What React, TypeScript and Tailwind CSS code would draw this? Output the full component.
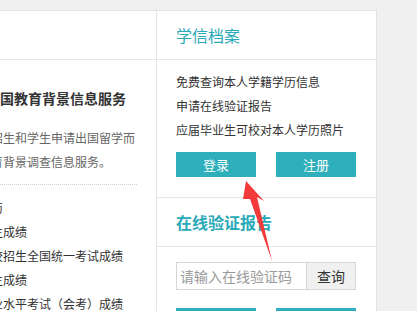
import React from "react";

const font = { fontFamily: '"Noto Sans CJK SC", "Noto Sans", sans-serif' };

export default function App() {
  return (
    <div
      className="relative w-[417px] h-[311px] overflow-hidden bg-[#f0f0f0] pt-[10px]"
      style={font}
    >
      <div className="flex w-[377px] h-[301px] bg-white border-t border-r border-[#e2e2e2]">
        {/* left panel */}
        <div className="w-[157px] shrink-0 border-r border-[#e6e6e6] overflow-hidden">
          <div className="h-[49px] border-b border-[#e6e6e6]" />
          <div className="-ml-[21px] w-[158px] pt-[26px]">
            <div className="ml-[7px] whitespace-nowrap text-[14px] leading-[24px] font-bold text-[#333]">
              中国教育背景信息服务
            </div>
            <div className="mt-[16px] text-[12px] leading-[24px] text-[#666] whitespace-nowrap">
              <div>校招生和学生申请出国留学而</div>
              <div>教育背景调查信息服务。</div>
            </div>
            <div className="mt-[10px] border-t border-dotted border-[#cfcfcf] pt-[11px] text-[12px] leading-[24px] text-[#333] whitespace-nowrap">
              <div>学历</div>
              <div>考生成绩</div>
              <div>高校招生全国统一考试成绩</div>
              <div>考生成绩</div>
              <div>学业水平考试（会考）成绩</div>
            </div>
          </div>
        </div>
        {/* right panel */}
        <div className="flex-1">
          <div className="h-[49px] border-b border-[#e6e6e6] flex items-center pl-[19px]">
            <span className="text-[16px] text-[#2aa9b8]">学信档案</span>
          </div>
          <div className="pl-[19px] pr-[20px] pt-[10px] pb-[20px] border-b border-[#e6e6e6]">
            <div className="text-[12px] leading-[24px] text-[#333]">
              <div>免费查询本人学籍学历信息</div>
              <div>申请在线验证报告</div>
              <div>应届毕业生可校对本人学历照片</div>
            </div>
            <div className="mt-[10px] flex gap-[20px]">
              <div className="w-[80px] h-[25px] bg-[#2eafbb] text-white text-[13px] flex items-center justify-center">
                登录
              </div>
              <div className="w-[80px] h-[25px] bg-[#2eafbb] text-white text-[13px] flex items-center justify-center">
                注册
              </div>
            </div>
          </div>
          <div className="h-[49px] border-b border-[#e6e6e6] flex items-center pl-[19px]">
            <span className="text-[16px] font-bold text-[#2aa9b8]">在线验证报告</span>
          </div>
          <div className="pl-[19px] pr-[20px] pt-[15px]">
            <div className="flex h-[28px]">
              <div className="w-[130px] h-[28px] border border-r-0 border-[#d6d6d6] flex items-center pl-[3px] text-[14px] text-[#999] whitespace-nowrap overflow-hidden">
                请输入在线验证码
              </div>
              <div className="w-[50px] h-[28px] border border-[#d6d6d6] bg-[#f0f0f0] flex items-center justify-center text-[14px] text-[#333]">
                查询
              </div>
            </div>
            <div className="mt-[18px] flex gap-[20px]">
              <div className="w-[80px] h-[25px] bg-[#2eafbb]" />
              <div className="w-[80px] h-[25px] bg-[#2eafbb]" />
            </div>
          </div>
        </div>
      </div>
      <svg
        className="absolute left-0 top-0 pointer-events-none"
        width="417"
        height="311"
        viewBox="0 0 417 311"
      >
        <polygon
          points="246,181 264,201 257,197 272,261 250,199 243,199"
          fill="#f33a3a"
        />
      </svg>
    </div>
  );
}
